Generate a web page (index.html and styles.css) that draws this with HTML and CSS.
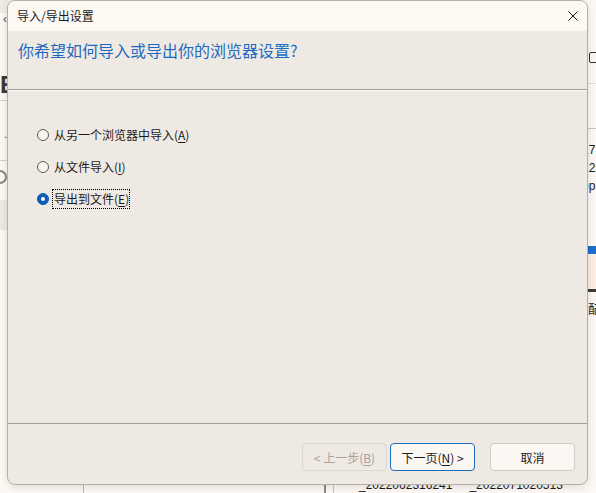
FILE: index.html
```html
<!DOCTYPE html>
<html lang="zh-CN">
<head>
    <meta charset="UTF-8">
    <meta name="viewport" content="width=device-width, initial-scale=1.0">
    <title>导入/导出设置</title>
    <link rel="stylesheet" href="styles.css">
</head>
<body>
    <!-- page behind the dialog -->
    <div class="page">
        <div class="sidebar">
            <div class="sb-top"></div>
            <div class="sb-back">‹</div>
            <div class="sb-title">Edge</div>
            <div class="sb-rule"></div>
            <div class="sb-dot">.</div>
            <div class="sb-rule sb-rule2"></div>
            <svg class="sb-icon" width="8" height="16" viewBox="0 0 8 16">
                <path d="M0 2 A6 6 0 0 1 0 14" fill="none" stroke="#8a8580" stroke-width="2"/>
            </svg>
            <div class="sb-band"></div>
        </div>
        <div class="tree"></div>
        <div class="scroll"></div>
        <div class="main">
            <div class="m-top"><span class="m-box"></span></div>
            <div class="m-bar"></div>
            <div class="info">
                <div>17</div>
                <div>125</div>
                <div>op</div>
            </div>
            <div class="m-sel"></div>
            <div class="m-band"></div>
            <div class="m-line"></div>
            <div class="info info-cjk">配置</div>
            <div class="files">
                <span>_2022062316241</span>
                <span>_2022071020513</span>
            </div>
        </div>
    </div>

    <div class="dialog">
        <div class="titlebar">
            <span class="title">导入/导出设置</span>
            <svg class="close" width="10" height="10" viewBox="0 0 10 10">
                <path d="M0.5 0.5 L9.5 9.5 M9.5 0.5 L0.5 9.5" stroke="#1b1b1b" stroke-width="1"/>
            </svg>
        </div>
        <div class="header">
            <h1>你希望如何导入或导出你的浏览器设置?</h1>
        </div>
        <div class="options">
            <label class="option">
                <span class="radio"></span>
                <span class="text">从另一个浏览器中导入(<u>A</u>)</span>
            </label>
            <label class="option">
                <span class="radio"></span>
                <span class="text">从文件导入(<u>I</u>)</span>
            </label>
            <label class="option">
                <span class="radio checked"></span>
                <span class="text focus">导出到文件(<u>E</u>)</span>
            </label>
        </div>
        <div class="footer">
            <button class="btn disabled">&lt; 上一步(<u>B</u>)</button>
            <button class="btn primary">下一页(<u>N</u>) &gt;</button>
            <button class="btn cancel">取消</button>
        </div>
    </div>
</body>
</html>
```

FILE: styles.css
```css
body {
    margin: 0;
    width: 596px;
    height: 493px;
    overflow: hidden;
    position: relative;
    background-color: #fdf8f3;
    font-family: "Liberation Sans", "Noto Sans CJK SC", sans-serif;
    font-size: 12px;
    color: #1b1b1b;
}

/* background page */
.page {
    display: flex;
    height: 493px;
}

.sidebar {
    width: 83px;
    flex-shrink: 0;
    border-right: 1px solid #bdb7b1;
    display: flex;
    flex-direction: column;
}

.sb-top {
    height: 13px;
    background-color: #f1ebe5;
}

.sb-back {
    margin: -1px 0 0 3px;
    line-height: 14px;
    color: #555;
}

.sb-title {
    margin-top: 47px;
    font-size: 24px;
    font-weight: bold;
    line-height: 24px;
    color: #3d3a37;
}

.sb-rule {
    margin-top: 3px;
    height: 1px;
    background-color: #d3cdc7;
}

.sb-dot {
    margin: 26px 0 0 4px;
    line-height: 14px;
    color: #666;
}

.sb-rule2 {
    margin-top: 19px;
}

.sb-icon {
    margin-top: 8px;
}

.sb-band {
    margin-top: 15px;
    height: 30px;
    background-color: #efe9e4;
}

.tree {
    width: 240px;
    flex-shrink: 0;
    border-right: 2px solid #8f8a85;
}

.scroll {
    width: 7px;
    flex-shrink: 0;
    border-right: 1px solid #c9c3bd;
}

.main {
    flex: 1;
    min-width: 0;
    overflow: hidden;
    display: flex;
    flex-direction: column;
}

.m-top {
    height: 84px;
    flex-shrink: 0;
    box-sizing: border-box;
    padding: 52px 0 0 255px;
    border-bottom: 1px solid #e4ded8;
}

.m-box {
    display: block;
    width: 9px;
    height: 9px;
    border: 1px solid #333;
    border-radius: 2px;
}

.m-bar {
    height: 45px;
    flex-shrink: 0;
    box-sizing: border-box;
    border-bottom: 1px solid #cbc5bf;
}

.info {
    padding: 12px 0 0 248px;
    line-height: 18px;
    white-space: nowrap;
}

.m-sel {
    margin-top: 51px;
    height: 8px;
    flex-shrink: 0;
    background-color: #1c6fcd;
}

.m-band {
    height: 35px;
    flex-shrink: 0;
    background-color: #fcefe2;
}

.m-line {
    height: 3px;
    flex-shrink: 0;
    background-color: #3d3a37;
}

.info-cjk {
    padding: 9px 0 0 254px;
}

.files {
    margin-top: auto;
    display: flex;
    gap: 17px;
    padding-left: 25px;
    line-height: 16px;
    white-space: nowrap;
}

/* dialog window */
.dialog {
    position: absolute;
    left: 7px;
    top: 0;
    width: 581px;
    height: 485px;
    box-sizing: border-box;
    border: 1px solid #b5afa9;
    border-radius: 8px;
    overflow: hidden;
    background-color: #efe9e3;
    box-shadow: 0 2px 8px rgba(0, 0, 0, 0.12);
    display: flex;
    flex-direction: column;
    font-family: "Noto Sans CJK SC", "Liberation Sans", sans-serif;
}

.titlebar {
    height: 30px;
    flex-shrink: 0;
    display: flex;
    align-items: center;
    justify-content: space-between;
    padding: 0 9px;
    background-color: #fdf8f2;
}

.title {
    font-size: 12px;
    line-height: 16px;
}

.header {
    height: 59px;
    flex-shrink: 0;
    box-sizing: border-box;
    border-bottom: 1px solid #a39d97;
    box-shadow: 0 1px 0 #fbf8f5;
}

h1 {
    margin: 0;
    padding: 9px 10px 0;
    font-size: 16px;
    font-weight: normal;
    line-height: 20px;
    color: #1c6bc0;
}

.options {
    flex: 1;
    display: flex;
    flex-direction: column;
    gap: 12px;
    padding: 35px 0 0 29px;
}

.option {
    display: flex;
    align-items: center;
    gap: 5px;
    height: 20px;
}

.radio {
    width: 12px;
    height: 12px;
    box-sizing: border-box;
    border: 1px solid #5f5a55;
    border-radius: 50%;
    background-color: #f7f3ef;
    position: relative;
}

.radio.checked {
    border-color: #0e5cb5;
    background-color: #0e5cb5;
}

.radio.checked::after {
    content: "";
    position: absolute;
    left: 3px;
    top: 3px;
    width: 4px;
    height: 4px;
    border-radius: 50%;
    background-color: #fff;
}

.text {
    font-size: 12px;
    line-height: 16px;
}

.text u,
.btn u {
    text-underline-offset: 2px;
}

.focus {
    margin-left: -1px;
    padding: 1px 0 1px 1px;
    outline: 1px dotted #000;
}

.footer {
    height: 61px;
    flex-shrink: 0;
    box-sizing: border-box;
    display: flex;
    justify-content: flex-end;
    align-items: flex-start;
    gap: 3px;
    padding: 19px 12px 0 0;
    border-top: 1px solid #a39d97;
}

.btn {
    width: 85px;
    height: 28px;
    padding: 0;
    font-family: inherit;
    font-size: 12px;
    color: #1b1b1b;
    background-color: #fbf7f3;
    border: 1px solid #d2ccc6;
    border-radius: 4px;
}

.btn.disabled {
    color: #a8a29c;
    background-color: #efe9e3;
    border-color: #ddd7d1;
}

.btn.primary {
    border-color: #1c6bc0;
}

.btn.cancel {
    margin-left: 12px;
}
```
